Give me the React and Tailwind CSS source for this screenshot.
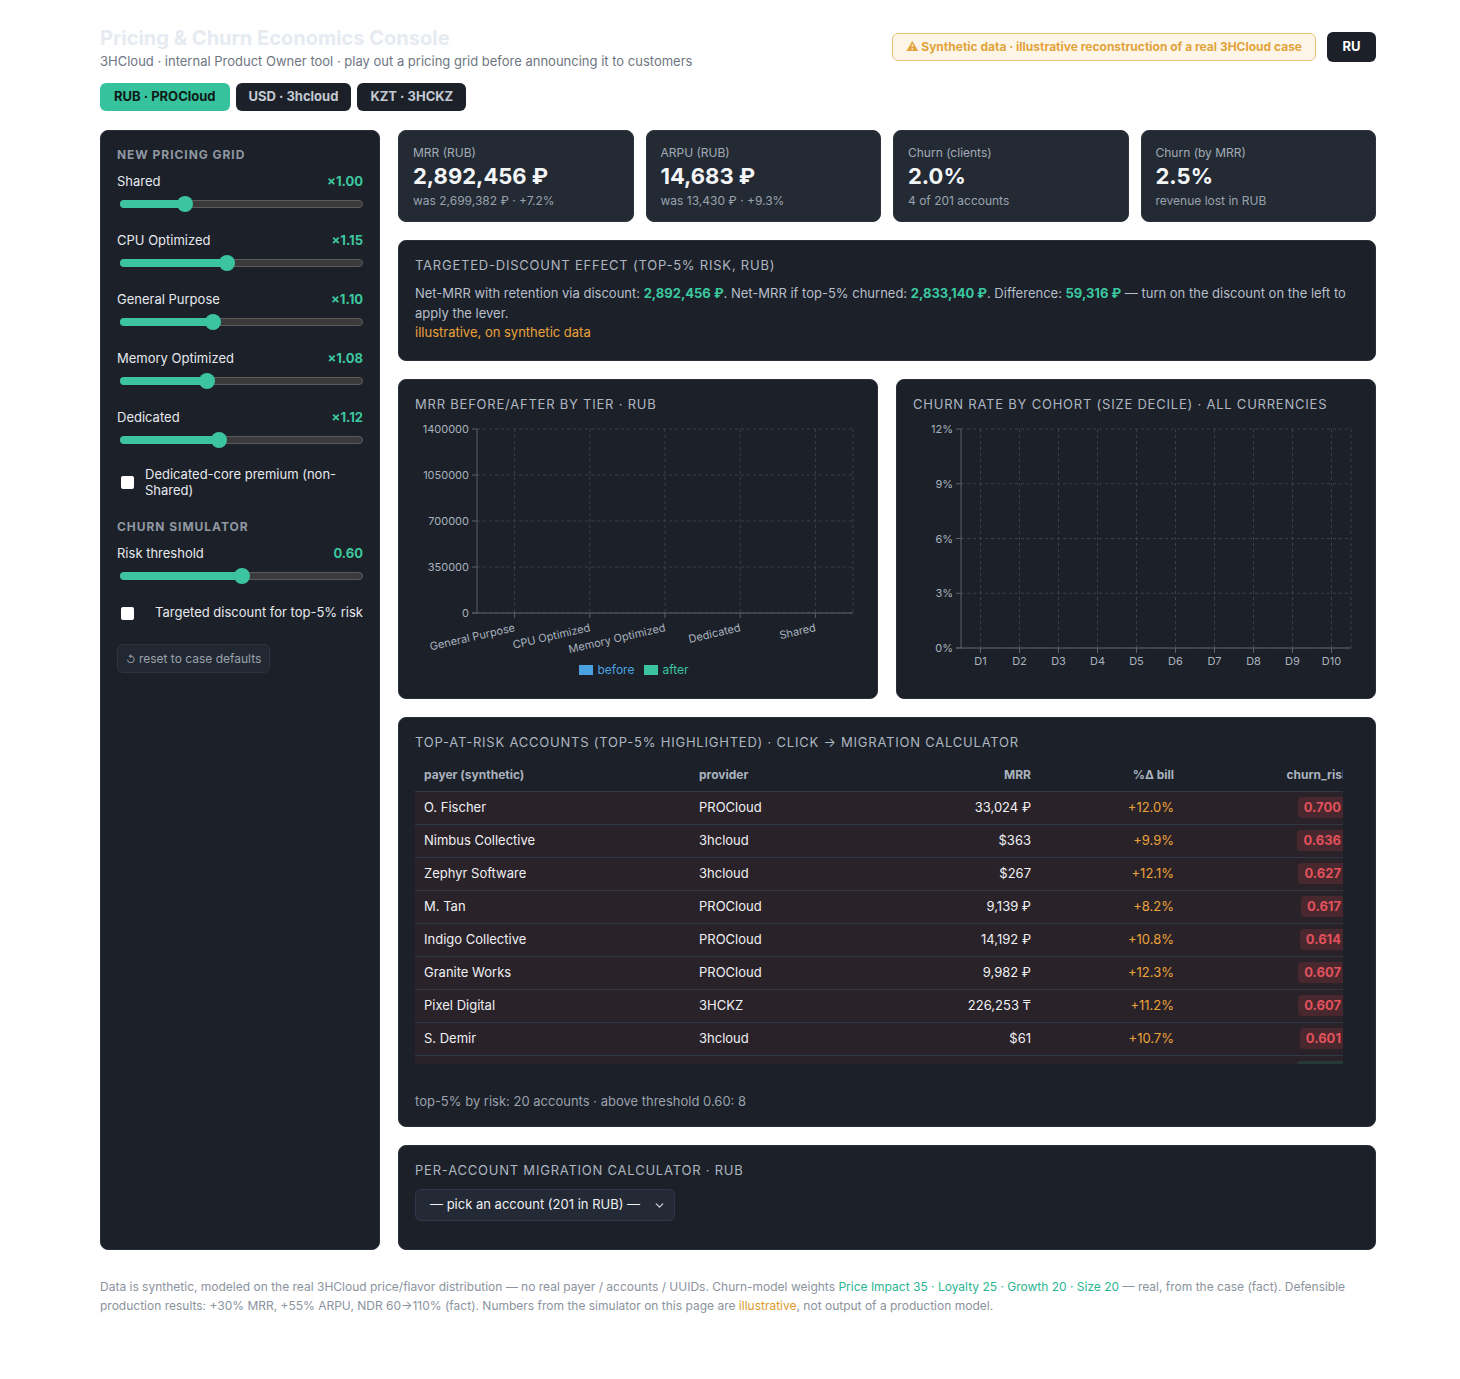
import { ChevronDown } from 'lucide-react'

const tiers = [
  { name: 'Shared', value: 1.0 },
  { name: 'CPU Optimized', value: 1.15 },
  { name: 'General Purpose', value: 1.1 },
  { name: 'Memory Optimized', value: 1.08 },
  { name: 'Dedicated', value: 1.12 },
]

const kpis = [
  { label: 'MRR (RUB)', value: '2,892,456 ₽', sub: 'was 2,699,382 ₽ · +7.2%' },
  { label: 'ARPU (RUB)', value: '14,683 ₽', sub: 'was 13,430 ₽ · +9.3%' },
  { label: 'Churn (clients)', value: '2.0%', sub: '4 of 201 accounts' },
  { label: 'Churn (by MRR)', value: '2.5%', sub: 'revenue lost in RUB' },
]

const rows = [
  ['O. Fischer', 'PROCloud', '33,024 ₽', '+12.0%', '0.700'],
  ['Nimbus Collective', '3hcloud', '$363', '+9.9%', '0.636'],
  ['Zephyr Software', '3hcloud', '$267', '+12.1%', '0.627'],
  ['M. Tan', 'PROCloud', '9,139 ₽', '+8.2%', '0.617'],
  ['Indigo Collective', 'PROCloud', '14,192 ₽', '+10.8%', '0.614'],
  ['Granite Works', 'PROCloud', '9,982 ₽', '+12.3%', '0.607'],
  ['Pixel Digital', '3HCKZ', '226,253 ₸', '+11.2%', '0.607'],
  ['S. Demir', '3hcloud', '$61', '+10.7%', '0.601'],
  ['L. Novak', 'PROCloud', '5,410 ₽', '+9.4%', '0.598'],
]

// slider drawn with divs, frac = position 0..1
const Slider = ({ frac }) => (
  <div className="relative h-4 ml-[3px] mt-1">
    <div className="absolute left-0 right-0 top-1 h-2 rounded-full bg-[#3a3a3a] border border-[#5c5c5c]" />
    <div
      className="absolute left-0 top-1 h-2 rounded-full bg-[#3cc4a0]"
      style={{ width: `calc(${frac} * (100% - 16px) + 8px)` }}
    />
    <div
      className="absolute top-0 w-4 h-4 rounded-full bg-[#3cc4a0]"
      style={{ left: `calc(${frac} * (100% - 16px))` }}
    />
  </div>
)

const SliderRow = ({ label, value, frac }) => (
  <div className="mb-[19px]">
    <div className="flex items-center justify-between h-5">
      <span className="text-[13px] text-[#e6e9ee]">{label}</span>
      <span className="text-[13px] font-bold text-[#3cc8a0]">{value}</span>
    </div>
    <Slider frac={frac} />
  </div>
)

const Box = () => (
  <input type="checkbox" className="appearance-none shrink-0 w-[13px] h-[13px] bg-white rounded-[2px] ml-1" />
)

const Sidebar = () => (
  <aside className="bg-[#1c2028] border border-[#2a3039] rounded-lg px-[16px] pt-[16px]">
    <h3 className="text-[12px] leading-4 font-bold tracking-[0.08em] text-[#8f98a3] uppercase">New pricing grid</h3>
    <div className="mt-[9px]">
      {tiers.map((t) => (
        <SliderRow key={t.name} label={t.name} value={`×${t.value.toFixed(2)}`} frac={(t.value - 0.8) / 0.8} />
      ))}
    </div>
    <label className="flex items-center gap-[11px] -mt-[1px]">
      <Box />
      <span className="text-[13px] leading-4 text-[#e6e9ee]">Dedicated-core premium (non-Shared)</span>
    </label>
    <h3 className="mt-[21px] text-[12px] leading-4 font-bold tracking-[0.08em] text-[#8f98a3] uppercase">Churn simulator</h3>
    <div className="mt-[9px]">
      <SliderRow label="Risk threshold" value="0.60" frac={0.5} />
    </div>
    <label className="flex items-center justify-between h-5">
      <Box />
      <span className="text-[13px] text-[#e6e9ee]">Targeted discount for top-5% risk</span>
    </label>
    <button className="mt-[21px] h-[29px] px-[8px] rounded-md bg-[#222831] border border-[#2e343d] text-[12px] text-[#9aa2ad]">
      <span className="text-[10px]">↺</span> reset to case defaults
    </button>
  </aside>
)

const Kpi = ({ label, value, sub }) => (
  <div className="bg-[#232a34] border border-[#2c333d] rounded-lg px-[14px] pt-[14px] h-[92px]">
    <div className="text-[12px] leading-4 text-[#a2aab5]">{label}</div>
    <div className="text-[22px] leading-[29px] font-bold text-[#f3f5f7] mt-[1px]">{value}</div>
    <div className="text-[12px] leading-4 text-[#9aa2ad] mt-[2px]">{sub}</div>
  </div>
)

const PanelTitle = ({ children }) => (
  <h3 className="text-[13px] leading-4 tracking-[0.06em] text-[#aeb6c0] uppercase">{children}</h3>
)

const Panel = ({ className = '', children }) => (
  <section className={`bg-[#1b2029] border border-[#2a3039] rounded-lg px-[16px] pt-[16px] ${className}`}>
    {children}
  </section>
)

const axisText = { fontFamily: 'Inter, sans-serif', fontSize: 11, fill: '#aab2bd' }

const Grid = ({ L, R, T, B, ys, centers }) => (
  <g>
    {ys.map(([, y]) => (
      <g key={y}>
        <line x1={L} x2={R} y1={y} y2={y} stroke="#3a414c" strokeDasharray="3 3" />
        <line x1={L - 5} x2={L} y1={y} y2={y} stroke="#5b626d" />
      </g>
    ))}
    {[...centers, R].map((x) => (
      <line key={x} x1={x} x2={x} y1={T} y2={B} stroke="#3a414c" strokeDasharray="3 3" />
    ))}
    {centers.map((x) => (
      <line key={x} x1={x} x2={x} y1={B} y2={B + 5} stroke="#5b626d" />
    ))}
    <line x1={L} x2={L} y1={T} y2={B} stroke="#5b626d" />
    <line x1={L - 5} x2={R} y1={B} y2={B} stroke="#5b626d" />
  </g>
)

const MrrChart = () => {
  const L = 62, R = 438, T = 10, B = 194
  const ys = [['1400000', 10], ['1050000', 56], ['700000', 102], ['350000', 148], ['0', 194]]
  const cats = ['General Purpose', 'CPU Optimized', 'Memory Optimized', 'Dedicated', 'Shared']
  const bw = (R - L) / cats.length
  const centers = cats.map((_, i) => L + bw / 2 + bw * i)
  return (
    <svg width="446" height="244" className="block">
      <Grid L={L} R={R} T={T} B={B} ys={ys} centers={centers} />
      {ys.map(([t, y]) => (
        <text key={t} x={L - 8} y={y + 4} textAnchor="end" style={axisText}>{t}</text>
      ))}
      {cats.map((c, i) => (
        <text
          key={c}
          x={centers[i] + 1}
          y={B + 18}
          textAnchor="end"
          transform={`rotate(-13 ${centers[i] + 1} ${B + 18})`}
          style={axisText}
        >
          {c}
        </text>
      ))}
    </svg>
  )
}

const CohortChart = () => {
  const L = 48, R = 438, T = 10, B = 229
  const ys = [['12%', 10], ['9%', 64.75], ['6%', 119.5], ['3%', 174.25], ['0%', 229]]
  const bw = (R - L) / 10
  const centers = Array.from({ length: 10 }, (_, i) => L + bw / 2 + bw * i)
  return (
    <svg width="446" height="262" className="block">
      <Grid L={L} R={R} T={T} B={B} ys={ys} centers={centers} />
      {ys.map(([t, y]) => (
        <text key={t} x={L - 8} y={y + 4} textAnchor="end" style={axisText}>{t}</text>
      ))}
      {centers.map((x, i) => (
        <text key={x} x={x} y={B + 17} textAnchor="middle" style={axisText}>{`D${i + 1}`}</text>
      ))}
    </svg>
  )
}

const RiskTable = () => (
  <div className="mt-[9px] mr-[16px] h-[305px] overflow-hidden">
    <table className="table-fixed w-[940px] border-collapse text-[13px]">
      <colgroup>
        <col className="w-[275px]" />
        <col className="w-[175px]" />
        <col className="w-[175px]" />
        <col className="w-[143px]" />
        <col className="w-[172px]" />
      </colgroup>
      <thead>
        <tr className="h-[32px] border-b border-[#323845] text-[12px] font-bold text-[#aab2bd]">
          <th className="text-left pl-[9px] font-bold">payer (synthetic)</th>
          <th className="text-left pl-[9px] font-bold">provider</th>
          <th className="text-right pr-[9px] font-bold">MRR</th>
          <th className="text-right pr-[9px] font-bold">%Δ bill</th>
          <th className="text-right pr-[6px] font-bold">churn_risk</th>
        </tr>
      </thead>
      <tbody>
        {rows.map((r, i) => (
          <tr key={r[0]} className="h-[33px] bg-[#2a2229] border-b border-[#323845]">
            <td className="pl-[9px] text-[#eef0f3]">{r[0]}</td>
            <td className="pl-[9px] text-[#eef0f3]">{r[1]}</td>
            <td className="text-right pr-[9px] text-[#eef0f3]">{r[2]}</td>
            <td className="text-right pr-[9px] text-[#eaa23a]">{r[3]}</td>
            <td className="text-right pr-[8px]">
              <span
                className={
                  i < 8
                    ? 'inline-block px-[6px] py-[1px] rounded bg-[#48272e] font-bold text-[#e0525c]'
                    : 'inline-block px-[6px] py-[1px] rounded bg-[#263a33] font-bold text-[#e0a13a]'
                }
              >
                {r[4]}
              </span>
            </td>
          </tr>
        ))}
      </tbody>
    </table>
  </div>
)

const App = () => {
  return (
    <div className="min-h-[1379px] bg-white font-['Inter',sans-serif] pl-[100px] pt-[26px] pb-[60px]">
      <div className="w-[1276px]">
        {/* Header */}
        <header className="flex items-start justify-between">
          <div>
            <h1 className="text-[20px] leading-6 font-bold text-[#e6ebf1]">Pricing &amp; Churn Economics Console</h1>
            <p className="mt-[1px] text-[13px] leading-5 text-[#6e7682]">
              3HCloud · internal Product Owner tool · play out a pricing grid before announcing it to customers
            </p>
            <div className="mt-[12px] flex gap-[6px]">
              <button className="h-[28px] px-[14px] rounded-md bg-[#35c29d] text-[13px] font-bold text-[#0f1a17]">RUB · PROCloud</button>
              <button className="h-[28px] px-[13px] rounded-md bg-[#1c2129] text-[13px] font-bold text-[#c3c9d2]">USD · 3hcloud</button>
              <button className="h-[28px] px-[13px] rounded-md bg-[#1c2129] text-[13px] font-bold text-[#c3c9d2]">KZT · 3HCKZ</button>
            </div>
          </div>
          <div className="flex items-center gap-[11px] pt-[6px]">
            <div className="h-[28px] px-[13px] flex items-center rounded-md border border-[#ecc27a] bg-[#fdf6e8] text-[12px] font-bold text-[#e3a33b]">
              ⚠ Synthetic data · illustrative reconstruction of a real 3HCloud case
            </div>
            <button className="h-[30px] w-[49px] rounded-md bg-[#1c2129] text-[13px] font-bold text-white">RU</button>
          </div>
        </header>

        {/* Main */}
        <div className="mt-[19px] grid grid-cols-[280px_minmax(0,1fr)] gap-[18px]">
          <Sidebar />
          <div className="flex flex-col gap-[18px] min-w-0">
            <div className="grid grid-cols-4 gap-[12px]">
              {kpis.map((k) => (
                <Kpi key={k.label} {...k} />
              ))}
            </div>

            <Panel className="pb-[18px]">
              <PanelTitle>Targeted-discount effect (top-5% risk, RUB)</PanelTitle>
              <p className="mt-[10px] text-[13px] leading-5 text-[#b7bfca]">
                Net-MRR with retention via discount: <b className="text-[#3cc8a0]">2,892,456 ₽</b>. Net-MRR if top-5% churned:{' '}
                <b className="text-[#3cc8a0]">2,833,140 ₽</b>. Difference: <b className="text-[#3cc8a0]">59,316 ₽</b> — turn on the discount on the left to apply the lever.
              </p>
              <p className="text-[13px] leading-[19px] text-[#eaa23a]">illustrative, on synthetic data</p>
            </Panel>

            <div className="grid grid-cols-2 gap-[18px]">
              <Panel className="h-[320px]">
                <PanelTitle>MRR before/after by tier · RUB</PanelTitle>
                <div className="mt-[7px]">
                  <MrrChart />
                </div>
                <div className="flex justify-center items-center gap-[10px] text-[12px] leading-4 pr-[8px] -mt-[1px]">
                  <span className="flex items-center gap-[4px] text-[#4aa3e0]">
                    <span className="w-[14px] h-[10px] bg-[#4aa3e0]" />
                    before
                  </span>
                  <span className="flex items-center gap-[4px] text-[#3cc4a0]">
                    <span className="w-[14px] h-[10px] bg-[#3cc4a0]" />
                    after
                  </span>
                </div>
              </Panel>
              <Panel className="h-[320px]">
                <PanelTitle>Churn rate by cohort (size decile) · all currencies</PanelTitle>
                <div className="mt-[7px]">
                  <CohortChart />
                </div>
              </Panel>
            </div>

            <Panel className="pb-[17px]">
              <PanelTitle>Top-at-risk accounts (top-5% highlighted) · click → migration calculator</PanelTitle>
              <RiskTable />
              <p className="mt-[29px] text-[13px] leading-4 text-[#9aa2ad]">
                top-5% by risk: 20 accounts · above threshold 0.60: 8
              </p>
            </Panel>

            <Panel className="pb-[28px]">
              <PanelTitle>Per-account migration calculator · RUB</PanelTitle>
              <div className="mt-[11px] w-[260px] h-[32px] flex items-center justify-between pl-[14px] pr-[8px] rounded-md bg-[#232a35] border border-[#30374a] text-[13px] text-[#eef0f3]">
                <span>— pick an account (201 in RUB) —</span>
                <ChevronDown size={13} strokeWidth={2.5} className="text-[#c9ced6]" />
              </div>
            </Panel>
          </div>
        </div>

        {/* Footer */}
        <p className="mt-[27px] text-[12px] leading-[19px] text-[#8b939e]">
          Data is synthetic, modeled on the real 3HCloud price/flavor distribution — no real payer / accounts / UUIDs. Churn-model weights{' '}
          <span className="text-[#2bb592]">Price Impact 35 · Loyalty 25 · Growth 20 · Size 20</span> — real, from the case (fact). Defensible
          production results: +30% MRR, +55% ARPU, NDR 60→110% (fact). Numbers from the simulator on this page are{' '}
          <span className="text-[#d99a2b]">illustrative</span>, not output of a production model.
        </p>
      </div>
    </div>
  )
}

export default App
